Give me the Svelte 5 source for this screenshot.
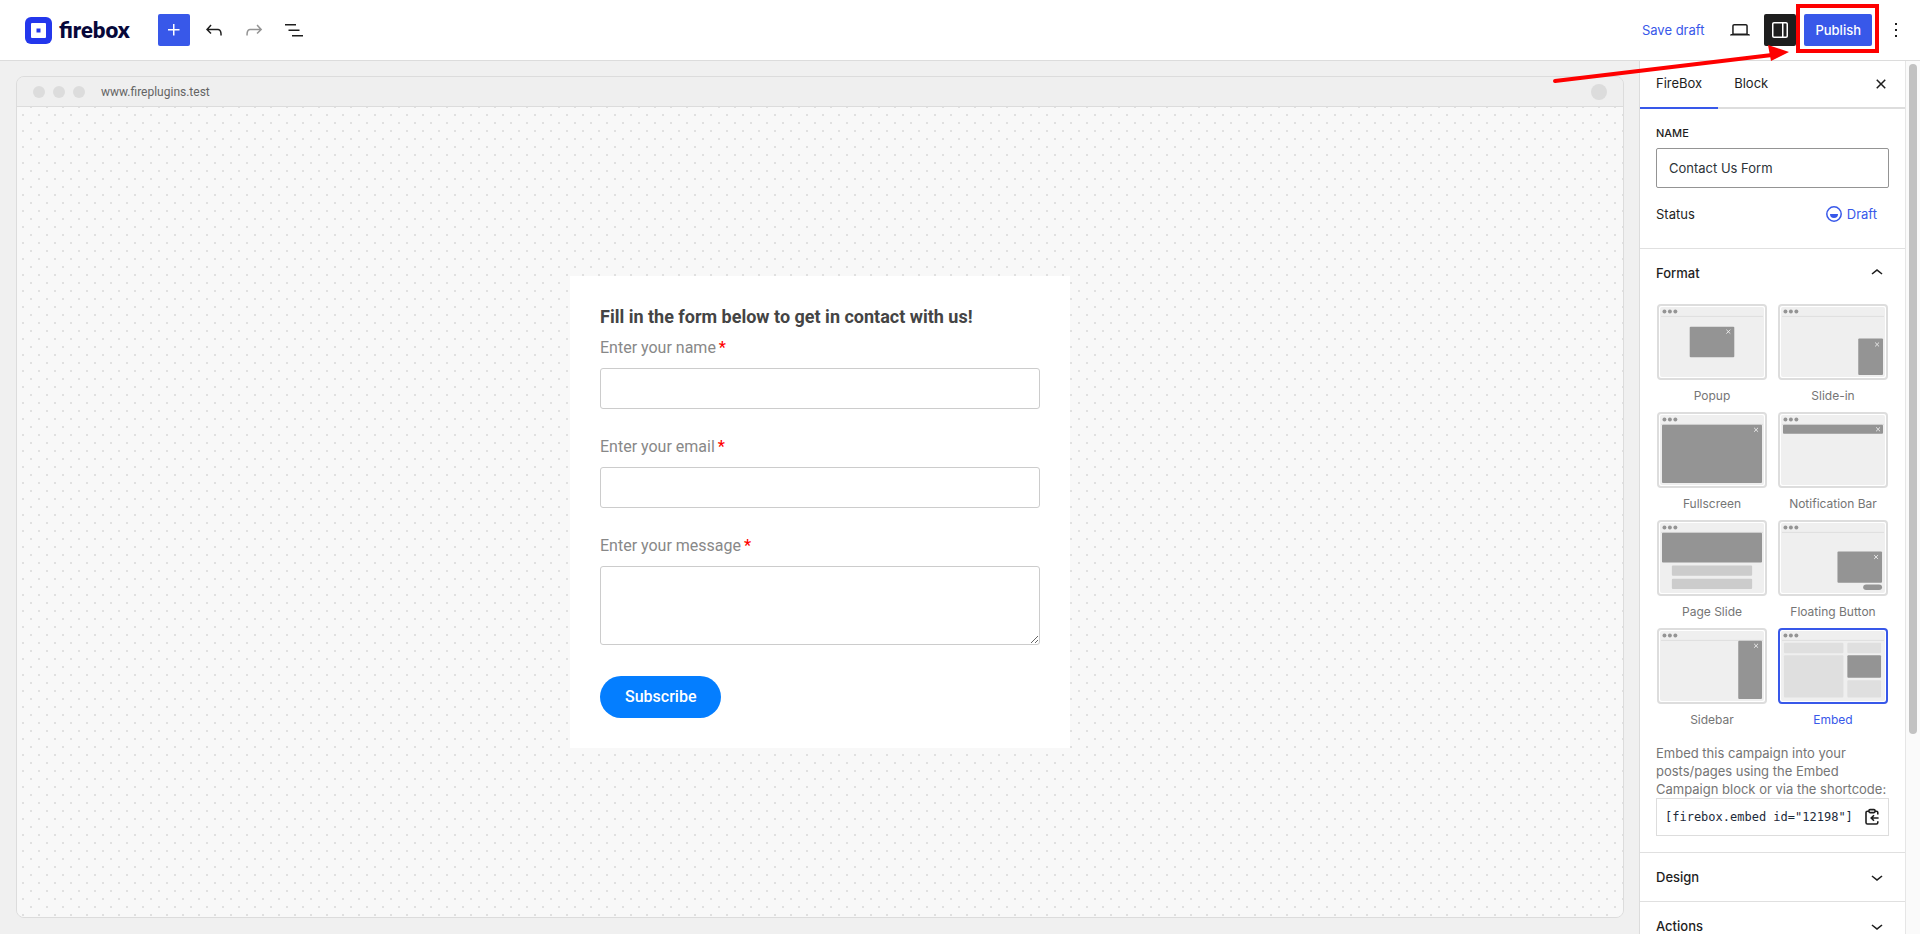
<script lang="ts">
  interface Block {
    x: number;
    y: number;
    w: number;
    h: number;
    tone?: "dark" | "mid" | "light";
    round?: number;
  }

  interface Format {
    id: string;
    label: string;
    blocks: Block[];
    close?: [number, number];
  }

  const formats: Format[] = [
    { id: "popup", label: "Popup", blocks: [{ x: 30, y: 20, w: 45, h: 31 }], close: [69, 25] },
    { id: "slidein", label: "Slide-in", blocks: [{ x: 78, y: 32, w: 25, h: 37 }], close: [97, 38] },
    { id: "fullscreen", label: "Fullscreen", blocks: [{ x: 2, y: 10, w: 101, h: 59 }], close: [97, 15] },
    { id: "bar", label: "Notification Bar", blocks: [{ x: 2, y: 10, w: 101, h: 9 }], close: [98, 14.5] },
    {
      id: "pageslide",
      label: "Page Slide",
      blocks: [
        { x: 2, y: 10, w: 101, h: 30 },
        { x: 12, y: 43, w: 81, h: 10.5, tone: "mid" },
        { x: 12, y: 56.5, w: 81, h: 10.5, tone: "mid" },
      ],
    },
    {
      id: "floating",
      label: "Floating Button",
      blocks: [
        { x: 57, y: 29, w: 45, h: 31.5 },
        { x: 83, y: 62.5, w: 19, h: 5.5, round: 3 },
      ],
      close: [96, 34.5],
    },
    { id: "sidebar", label: "Sidebar", blocks: [{ x: 79, y: 10, w: 24, h: 59 }], close: [97, 15] },
    {
      id: "embed",
      label: "Embed",
      blocks: [
        { x: 3, y: 12, w: 60, h: 10.5, tone: "light" },
        { x: 67, y: 12, w: 34, h: 10.5, tone: "light" },
        { x: 3, y: 24.5, w: 60, h: 43, tone: "light" },
        { x: 67, y: 50, w: 34, h: 17.5, tone: "light" },
        { x: 67, y: 24.5, w: 34, h: 23 },
      ],
    },
  ];

  const tones = { dark: "#949494", mid: "#cccccc", light: "#dfdfdf" };

  const icons = {
    plus: "M11 12.5V17.5H12.5V12.5H17.5V11H12.5V6H11V11H6V12.5H11Z",
    undo: "M18.3 11.7c-.6-.6-1.4-.9-2.3-.9H6.7l2.9-3.3-1.1-1-4.5 5L8.5 16l1-1-2.7-2.7H16c.5 0 .9.2 1.3.5 1 1 1 3.4 1 4.5v.3h1.5v-.2c0-1.5 0-4.3-1.5-5.7z",
    redo: "M15.6 6.5l-1.1 1 2.9 3.3H8c-.9 0-1.7.3-2.3.9-1.4 1.5-1.4 4.2-1.4 5.6v.2h1.5v-.3c0-1.1 0-3.5 1-4.5.3-.3.7-.5 1.3-.5h9.2L14.5 15l1.1 1.1 4.6-4.6-4.6-5z",
    list: "M3 6h11v1.5H3V6Zm3.5 5.5h11V13h-11v-1.5ZM21 17H10v1.5h11V17Z",
    laptop: "M20.5 16h-.7V8c0-1.1-.9-2-2-2H6.2c-1.1 0-2 .9-2 2v8h-.7c-.8 0-1.5.7-1.5 1.5h20c0-.8-.7-1.5-1.5-1.5zM5.7 8c0-.3.2-.5.5-.5h11.6c.3 0 .5.2.5.5v7.6H5.7V8z",
    drawer: "M18 4H6c-1.1 0-2 .9-2 2v12c0 1.1.9 2 2 2h12c1.1 0 2-.9 2-2V6c0-1.1-.9-2-2-2zm-4 14.5H6c-.3 0-.5-.2-.5-.5V6c0-.3.2-.5.5-.5h8v13zm4.5-.5c0 .3-.2.5-.5.5h-2.5v-13H18c.3 0 .5.2.5.5v12z",
    more: "M13 19h-2v-2h2v2zm0-6h-2v-2h2v2zm0-6h-2V5h2v2z",
    close: "M12 13.06l3.712 3.713 1.061-1.06L13.061 12l3.712-3.712-1.06-1.06L12 10.938 8.288 7.227l-1.061 1.06L10.939 12l-3.712 3.712 1.06 1.061L12 13.061z",
    up: "M6.5 12.4L12 8l5.5 4.4-.9 1.2L12 10l-4.5 3.6-1-1.2z",
    down: "M17.5 11.6L12 16l-5.5-4.4.9-1.2L12 14l4.5-3.6 1 1.2z",
  };

  let name = $state("Contact Us Form");
  let selected = $state("embed");
  let formatOpen = $state(true);
  let tab = $state("FireBox");
</script>

{#snippet icon(d: string)}
  <svg class="icon" viewBox="0 0 24 24" width="24" height="24" aria-hidden="true"><path {d} /></svg>
{/snippet}

<div class="editor">
  <header>
    <div class="tools">
      <a class="logo" href="#home">
        <svg viewBox="0 0 27 27" width="27" height="27" aria-hidden="true">
          <rect width="27" height="27" rx="6" fill="#2337ec" />
          <rect x="6" y="6" width="15" height="15" rx="1" fill="#fff" />
          <rect x="11.5" y="11.5" width="4" height="4" fill="#2337ec" />
        </svg>
        <span>firebox</span>
      </a>
      <button class="tool primary" aria-label="Add block">{@render icon(icons.plus)}</button>
      <button class="tool" aria-label="Undo">{@render icon(icons.undo)}</button>
      <button class="tool" aria-label="Redo" disabled>{@render icon(icons.redo)}</button>
      <button class="tool" aria-label="List view">{@render icon(icons.list)}</button>
    </div>
    <div class="tools">
      <button class="save">Save draft</button>
      <button class="tool" aria-label="Preview">{@render icon(icons.laptop)}</button>
      <button class="tool pressed" aria-label="Settings">{@render icon(icons.drawer)}</button>
      <div class="publish-wrap">
        <button class="publish">Publish</button>
        <div class="mark"></div>
        <svg class="arrow" viewBox="0 0 240 44" width="240" height="44" aria-hidden="true">
          <path d="M5 39 L222 13" stroke="#fe0000" stroke-width="4" stroke-linecap="round" />
          <path d="M218 3 L239 10 L221 19 Z" fill="#fe0000" />
        </svg>
      </div>
      <button class="tool" aria-label="Options">{@render icon(icons.more)}</button>
    </div>
  </header>

  <div class="body">
    <main>
      <div class="browser">
        <div class="bar">
          <i></i><i></i><i></i>
          <span>www.fireplugins.test</span>
          <i class="avatar"></i>
        </div>
        <div class="canvas">
          <form onsubmit={(e) => e.preventDefault()}>
            <h2>Fill in the form below to get in contact with us!</h2>
            <label for="f-name">Enter your name <b>*</b></label>
            <input id="f-name" type="text" />
            <label for="f-email">Enter your email <b>*</b></label>
            <input id="f-email" type="email" />
            <label for="f-message">Enter your message <b>*</b></label>
            <textarea id="f-message"></textarea>
            <button class="subscribe">Subscribe</button>
          </form>
        </div>
      </div>
    </main>

    <aside>
      <div class="panels">
        <div class="tabs">
          {#each ["FireBox", "Block"] as t}
            <button class="tab" class:active={tab === t} onclick={() => (tab = t)}>{t}</button>
          {/each}
          <button class="close" aria-label="Close settings">{@render icon(icons.close)}</button>
        </div>

        <section class="general">
          <label for="campaign">Name</label>
          <input id="campaign" type="text" bind:value={name} />
          <div class="status">
            <span>Status</span>
            <button>
              <svg viewBox="0 0 16 16" width="16" height="16" aria-hidden="true">
                <circle cx="8" cy="8" r="7.2" fill="none" stroke="currentColor" stroke-width="1.5" />
                <path d="M4 8h8a4 4 0 0 1-8 0z" fill="currentColor" />
              </svg>
              Draft
            </button>
          </div>
        </section>

        <section>
          <button class="panel-title" onclick={() => (formatOpen = !formatOpen)}>
            Format {@render icon(formatOpen ? icons.up : icons.down)}
          </button>
          {#if formatOpen}
            <div class="formats">
              {#each formats as f (f.id)}
                <button class="format" class:selected={selected === f.id} onclick={() => (selected = f.id)}>
                  <span class="thumb">
                    <svg viewBox="0 0 105 71" preserveAspectRatio="none" aria-hidden="true">
                      <rect width="105" height="71" rx="2" fill="#efefef" />
                      <g fill="#949494">
                        <circle cx="4.5" cy="4.5" r="2" />
                        <circle cx="10" cy="4.5" r="2" />
                        <circle cx="15.5" cy="4.5" r="2" />
                      </g>
                      <rect x="1" y="9" width="103" height="1" fill="#dedede" />
                      {#each f.blocks as b}
                        <rect x={b.x} y={b.y} width={b.w} height={b.h} rx={b.round ?? 1} fill={tones[b.tone ?? "dark"]} />
                      {/each}
                      {#if f.close}
                        <path
                          d="M{f.close[0] - 2} {f.close[1] - 2}l4 4m0 -4l-4 4"
                          stroke="#f0f0f0"
                          stroke-width="0.9"
                        />
                      {/if}
                    </svg>
                  </span>
                  <span class="caption">{f.label}</span>
                </button>
              {/each}
            </div>
            <p>Embed this campaign into your posts/pages using the Embed Campaign block or via the shortcode:</p>
            <div class="shortcode">
              <code>[firebox.embed id="12198"]</code>
              <button aria-label="Copy shortcode">
                <svg viewBox="0 0 16 18" width="16" height="18" fill="none" stroke="#1e1e1e" stroke-width="1.6" aria-hidden="true">
                  <path d="M5 3.2H3.4Q2 3.2 2 4.6V14.4Q2 16 3.4 16H12.4Q13.8 16 13.8 14.4V13.2M11 3.2H12.4Q13.8 3.2 13.8 4.6V6.6" />
                  <rect x="5" y="1.6" width="6" height="3" rx="1" />
                  <path d="M14.6 10H7.4M10 7.2L7.2 10l2.8 2.8" />
                </svg>
              </button>
            </div>
          {/if}
        </section>

        <section><button class="panel-title">Design {@render icon(icons.down)}</button></section>
        <section><button class="panel-title">Actions {@render icon(icons.down)}</button></section>
      </div>
      <div class="rail"><div class="handle"></div></div>
    </aside>
  </div>
</div>

<style>
  :global(body) {
    margin: 0;
  }
  .editor {
    --blue: #3858e9;
    --ink: #1e1e1e;
    height: 100vh;
    display: flex;
    flex-direction: column;
    overflow: hidden;
    background: #f0f0f0;
    color: var(--ink);
    font: 13px/18px Inter, "Liberation Sans", sans-serif;
  }
  .editor * {
    box-sizing: border-box;
  }
  button {
    font: inherit;
    color: inherit;
    background: none;
    border: 0;
    padding: 0;
    cursor: pointer;
  }
  .icon {
    display: block;
    fill: currentColor;
  }

  header {
    display: flex;
    justify-content: space-between;
    align-items: center;
    height: 61px;
    flex-shrink: 0;
    padding: 0 8px 0 25px;
    background: #fff;
    border-bottom: 1px solid #dcdcdc;
  }
  .tools {
    display: flex;
    align-items: center;
    gap: 8px;
  }
  .logo {
    display: flex;
    align-items: center;
    gap: 7px;
    width: 125px;
    color: #07083a;
    font: 800 22px/28px Lato, sans-serif;
    text-decoration: none;
  }
  .tool {
    display: grid;
    place-items: center;
    width: 32px;
    height: 32px;
    border-radius: 2px;
  }
  .tool:disabled {
    color: #949494;
  }
  .tool.primary {
    background: var(--blue);
    color: #fff;
  }
  .tool.pressed {
    background: var(--ink);
    color: #fff;
  }
  .save {
    padding: 0 12px;
    color: var(--blue);
  }
  .publish-wrap {
    position: relative;
  }
  .publish {
    height: 32px;
    padding: 0 11px;
    border-radius: 2px;
    background: var(--blue);
    color: #fff;
    font-weight: 500;
  }
  .mark {
    position: absolute;
    inset: -10px -7px -7px -8px;
    border: 4px solid #fe0000;
    pointer-events: none;
  }
  .arrow {
    position: absolute;
    z-index: 1;
    top: 28px;
    right: 82px;
    fill: none;
    pointer-events: none;
  }

  .body {
    flex: 1;
    display: flex;
    min-height: 0;
  }
  main {
    flex: 1;
    display: flex;
    padding: 15px 15px 16px 16px;
  }
  .browser {
    flex: 1;
    display: flex;
    flex-direction: column;
    border: 1px solid #dcdcdc;
    border-radius: 8px;
    overflow: hidden;
  }
  .bar {
    display: flex;
    align-items: center;
    gap: 8px;
    height: 30px;
    padding: 0 16px;
    background: #efefef;
    border-bottom: 1px solid #dcdcdc;
    color: #646464;
    font: 12px/16px Roboto, sans-serif;
  }
  .bar i {
    width: 12px;
    height: 12px;
    border-radius: 50%;
    background: #dcdcdc;
  }
  .bar span {
    margin-left: 8px;
  }
  .bar .avatar {
    width: 16px;
    height: 16px;
    margin-left: auto;
  }
  .canvas {
    flex: 1;
    display: grid;
    place-items: center;
    background-color: #f8f8f8;
    background-image: radial-gradient(circle at 1px 1px, #e0e0e0 1px, transparent 1px),
      radial-gradient(circle at 1px 1px, #e0e0e0 1px, transparent 1px);
    background-size: 16px 16px;
    background-position: 5px 7px, 13px 15px;
  }

  form {
    display: flex;
    flex-direction: column;
    width: 500px;
    padding: 30px;
    background: #fff;
    font: 16px/24px Roboto, sans-serif;
  }
  form h2 {
    margin: 0 0 8px;
    color: #444;
    font-size: 18px;
    line-height: 22px;
  }
  form label {
    margin-bottom: 8px;
    color: #888;
  }
  form label b {
    color: #f00;
    font-weight: 500;
    margin-left: -1px;
  }
  form input,
  form textarea {
    height: 41px;
    margin: 0 0 26px;
    padding: 8px 12px;
    border: 1px solid #ccc;
    border-radius: 3px;
    background: #fff;
    font: inherit;
  }
  form textarea {
    height: 79px;
    margin-bottom: 31px;
  }
  .subscribe {
    align-self: flex-start;
    height: 42px;
    padding: 0 25px;
    border-radius: 21px;
    background: #047eff;
    color: #fff;
    font-weight: 500;
  }

  aside {
    display: flex;
    width: 281px;
    background: #fff;
    border-left: 1px solid #dcdcdc;
    overflow: hidden;
  }
  .panels {
    flex: 1;
    min-width: 0;
  }
  .rail {
    width: 15px;
    padding: 3px 2px 0 3px;
    background: #fafafa;
    border-left: 1px solid #e6e6e6;
  }
  .handle {
    width: 8px;
    height: 77%;
    border-radius: 4px;
    background: #c2c2c2;
  }
  .tabs {
    display: flex;
    height: 48px;
    padding-right: 12px;
    box-shadow: inset 0 -2px #ddd;
  }
  .tab {
    padding: 0 16px 4px;
  }
  .tab.active {
    box-shadow: inset 0 -2px var(--blue);
  }
  .close {
    margin-left: auto;
    padding-bottom: 2px;
  }
  section {
    padding: 0 16px;
    border-bottom: 1px solid #e0e0e0;
  }
  .general {
    padding: 16px 16px 18px;
  }
  .general label {
    display: block;
    margin-bottom: 7px;
    font-size: 11px;
    font-weight: 500;
    line-height: 16px;
    text-transform: uppercase;
  }
  .general input {
    display: block;
    width: 100%;
    height: 40px;
    padding: 0 12px;
    border: 1px solid #949494;
    border-radius: 2px;
    color: #2c3338;
    font: inherit;
  }
  .status {
    display: flex;
    justify-content: space-between;
    align-items: center;
    height: 32px;
    margin-top: 10px;
  }
  .status button {
    display: flex;
    align-items: center;
    gap: 5px;
    padding: 0 12px;
    color: var(--blue);
  }
  .panel-title {
    display: flex;
    justify-content: space-between;
    align-items: center;
    width: 100%;
    height: 48px;
    font-weight: 500;
  }
  .formats {
    display: grid;
    grid-template-columns: 1fr 1fr;
    column-gap: 11px;
    padding: 7px 1px 0;
  }
  .format {
    color: #757575;
    font-size: 12px;
  }
  .thumb {
    display: block;
    height: 76px;
    padding: 1px;
    border: 2px solid #ddd;
    border-radius: 4px;
  }
  .thumb svg {
    display: block;
    width: 100%;
    height: 70px;
  }
  .caption {
    display: block;
    line-height: 32px;
  }
  .selected {
    color: var(--blue);
  }
  .selected .thumb {
    border-color: var(--blue);
  }
  p {
    margin: 8px 0 0;
    color: #757575;
  }
  .shortcode {
    display: flex;
    justify-content: space-between;
    align-items: center;
    height: 38px;
    margin-bottom: 16px;
    padding: 0 8px;
    border: 1px solid #ddd;
  }
  .shortcode code {
    color: #1d2a3a;
    font: 12px/18px "DejaVu Sans Mono", monospace;
    white-space: nowrap;
  }
  .shortcode svg {
    display: block;
  }
</style>
